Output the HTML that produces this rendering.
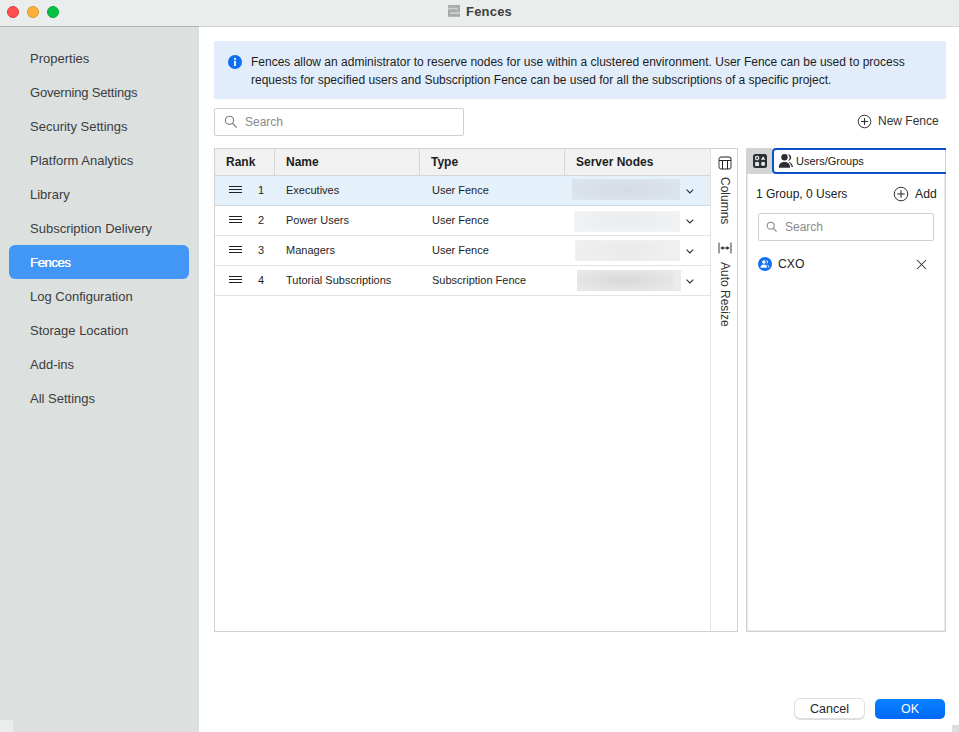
<!DOCTYPE html>
<html><head><meta charset="utf-8">
<style>
*{box-sizing:border-box;margin:0;padding:0}
html,body{width:959px;height:732px;overflow:hidden;background:#fff;font-family:"Liberation Sans",sans-serif;color:#222}
.abs{position:absolute}
svg{position:absolute;overflow:visible}
#title{left:0;top:0;width:959px;height:26px;background:#e9edec}
.dot{position:absolute;top:6px;width:12px;height:12px;border-radius:50%}
#side{left:0;top:27px;width:199px;height:705px;background:#dce0df}
.nav{position:absolute;left:30px;font-size:13px;color:#3b3d3e;line-height:16px;white-space:nowrap}
#sel{left:9px;top:245px;width:180px;height:34px;background:#4296f5;border-radius:6px}
#info{left:214px;top:41px;width:732px;height:58px;background:#e1edfb}
.t12{font-size:12px;line-height:18px;white-space:nowrap}
#search{left:214px;top:108px;width:250px;height:28px;border:1px solid #cfcfcf;border-radius:2px;background:#fff}
#table{left:214px;top:148px;width:524px;height:484px;border:1px solid #d2d2d2;background:#fff}
#thead{left:0;top:0;width:495px;height:27px;background:#f1f1f1;border-bottom:1px solid #d6d6d6}
.th{position:absolute;top:0;height:26px;font-weight:bold;font-size:12px;line-height:26px;color:#1e1e1e;white-space:nowrap}
.vd{position:absolute;top:0;width:1px;height:26px;background:#d6d6d6}
.row{position:absolute;left:0;width:495px;height:30px;border-bottom:1px solid #e3e3e3}
.cell{position:absolute;top:0;font-size:11px;line-height:29px;color:#1e1e1e;white-space:nowrap}
.blur{position:absolute;left:357px;width:108px;height:21px;filter:blur(0.4px)}
#colstrip{left:495px;top:0;width:1px;height:482px;background:#e2e2e2}
#rp{left:746px;top:174px;width:200px;height:458px;border:1px solid #cfd1d1;border-top:none;background:#fff;box-shadow:inset 1px -1px 0 #eaebeb,inset -1px 0 0 #eaebeb}
.btn{position:absolute;height:21px;border-radius:5px;font-size:13px;line-height:21px;text-align:center}
.vt{position:absolute;font-size:12px;line-height:14px;color:#333;transform-origin:0 0;transform:rotate(90deg);white-space:nowrap}
</style></head><body>
<div id="title" class="abs">
  <div class="dot" style="left:7px;background:#fe4e4e;border:0.5px solid #e03a3a"></div>
  <div class="dot" style="left:27px;background:#feb03b;border:0.5px solid #e0952a"></div>
  <div class="dot" style="left:47px;background:#05c245;border:0.5px solid #03a838"></div>
  <svg style="left:448px;top:5px" width="12" height="12" viewBox="0 0 12 12">
    <rect x="0" y="0" width="12" height="11.8" fill="#a9aaaa"/>
    <rect x="0" y="2.8" width="10" height="1.6" fill="#cfd1d1"/>
    <rect x="9.2" y="4.4" width="0.9" height="2.6" fill="#c4c6c6"/>
    <rect x="2" y="7.2" width="10" height="1.7" fill="#cfd1d1"/>
    <rect x="1" y="0.9" width="3.5" height="0.7" fill="#b8b9b9"/>
  </svg>
  <div class="abs" style="left:466px;top:4px;font-size:13px;font-weight:bold;color:#404040;line-height:16px;letter-spacing:0.2px">Fences</div>
</div>
<div id="side" class="abs"></div>
<div class="abs" style="left:0;top:26px;width:199px;height:1px;background:#aeb2b1"></div>
<div class="abs" style="left:199px;top:26px;width:760px;height:1px;background:#d3d4d4"></div>
<div id="sel" class="abs"></div>
<div class="nav" style="top:51px">Properties</div>
<div class="nav" style="top:85px;letter-spacing:-0.18px">Governing Settings</div>
<div class="nav" style="top:119px">Security Settings</div>
<div class="nav" style="top:153px">Platform Analytics</div>
<div class="nav" style="top:187px">Library</div>
<div class="nav" style="top:221px">Subscription Delivery</div>
<div class="nav" style="top:255px;color:#fff;letter-spacing:-0.4px;text-shadow:0.35px 0 0 #fff">Fences</div>
<div class="nav" style="top:289px">Log Configuration</div>
<div class="nav" style="top:323px">Storage Location</div>
<div class="nav" style="top:357px">Add-ins</div>
<div class="nav" style="top:391px">All Settings</div>
<div class="abs" style="left:0;top:720px;width:13px;height:12px;background:#e9eeec"></div>

<div id="info" class="abs">
  <svg style="left:14px;top:14px" width="14" height="14" viewBox="0 0 14 14">
    <circle cx="7" cy="7" r="7" fill="#0f6ff0"/>
    <rect x="6.1" y="3" width="1.8" height="1.8" fill="#fff"/>
    <rect x="6.1" y="5.8" width="1.8" height="5.2" fill="#fff"/>
  </svg>
  <div class="abs t12" style="left:37px;top:12px;color:#1d1d1d">Fences allow an administrator to reserve nodes for use within a clustered environment. User Fence can be used to process<br>requests for specified users and Subscription Fence can be used for all the subscriptions of a specific project.</div>
</div>

<div id="search" class="abs">
  <svg style="left:10px;top:7px" width="14" height="14" viewBox="0 0 14 14">
    <circle cx="4.5" cy="4.3" r="4.1" fill="none" stroke="#7c7c7c" stroke-width="1.15"/>
    <line x1="7.4" y1="7.2" x2="11.6" y2="11.5" stroke="#7c7c7c" stroke-width="1.2"/>
  </svg>
  <div class="abs" style="left:30px;top:5px;font-size:12px;color:#8a8a8a;line-height:16px">Search</div>
</div>
<svg style="left:857px;top:114px" width="15" height="15" viewBox="0 0 15 15">
  <circle cx="7.5" cy="7.5" r="6.3" fill="none" stroke="#333" stroke-width="1"/>
  <line x1="7.5" y1="4" x2="7.5" y2="11" stroke="#333" stroke-width="1.1"/>
  <line x1="4" y1="7.5" x2="11" y2="7.5" stroke="#333" stroke-width="1.1"/>
</svg>
<div class="abs" style="left:878px;top:113px;font-size:12px;line-height:16px;color:#333">New Fence</div>

<div id="table" class="abs">
  <div id="thead" class="abs">
    <div class="th" style="left:11px">Rank</div>
    <div class="vd" style="left:59px"></div>
    <div class="th" style="left:71px">Name</div>
    <div class="vd" style="left:204px"></div>
    <div class="th" style="left:216px">Type</div>
    <div class="vd" style="left:349px"></div>
    <div class="th" style="left:361px">Server Nodes</div>
  </div>
  <div class="row" style="top:27px;background:#e4f0fa;border-bottom-color:#cfdbe6">
    <svg style="left:14px;top:9px" width="14" height="8"><path d="M0 1.5H13M0 4.5H13M0 7.5H13" stroke="#222" stroke-width="1"/></svg>
    <div class="cell" style="left:43px">1</div><div class="cell" style="left:71px">Executives</div><div class="cell" style="left:217px">User Fence</div>
    <div class="blur" style="top:3px;background:radial-gradient(ellipse 60% 70% at 50% 50%,#d4dbe3,#dce4ec)"></div>
    <svg style="left:471px;top:13px" width="9" height="5"><path d="M0.6 0.6L3.9 3.9L7.2 0.6" fill="none" stroke="#2a2a2a" stroke-width="1.05"/></svg>
  </div>
  <div class="row" style="top:57px">
    <svg style="left:14px;top:9px" width="14" height="8"><path d="M0 1.5H13M0 4.5H13M0 7.5H13" stroke="#222" stroke-width="1"/></svg>
    <div class="cell" style="left:43px">2</div><div class="cell" style="left:71px">Power Users</div><div class="cell" style="left:217px">User Fence</div>
    <div class="blur" style="top:5px;background:radial-gradient(ellipse 60% 70% at 50% 45%,#e9ebed,#f2f3f4);left:359px;width:106px"></div>
    <svg style="left:471px;top:13px" width="9" height="5"><path d="M0.6 0.6L3.9 3.9L7.2 0.6" fill="none" stroke="#2a2a2a" stroke-width="1.05"/></svg>
  </div>
  <div class="row" style="top:87px">
    <svg style="left:14px;top:9px" width="14" height="8"><path d="M0 1.5H13M0 4.5H13M0 7.5H13" stroke="#222" stroke-width="1"/></svg>
    <div class="cell" style="left:43px">3</div><div class="cell" style="left:71px">Managers</div><div class="cell" style="left:217px">User Fence</div>
    <div class="blur" style="top:4px;background:radial-gradient(ellipse 60% 70% at 50% 50%,#eaeaea,#f0f0f0);left:360px;width:105px"><div class="abs" style="left:89px;top:0;width:16px;height:21px;background:#efefef"></div></div>
    <svg style="left:471px;top:13px" width="9" height="5"><path d="M0.6 0.6L3.9 3.9L7.2 0.6" fill="none" stroke="#2a2a2a" stroke-width="1.05"/></svg>
  </div>
  <div class="row" style="top:117px">
    <svg style="left:14px;top:9px" width="14" height="8"><path d="M0 1.5H13M0 4.5H13M0 7.5H13" stroke="#222" stroke-width="1"/></svg>
    <div class="cell" style="left:43px">4</div><div class="cell" style="left:71px">Tutorial Subscriptions</div><div class="cell" style="left:217px">Subscription Fence</div>
    <div class="blur" style="top:4px;background:radial-gradient(ellipse 55% 60% at 45% 50%,#d8d8d8,#e8e8e8);left:362px;width:104px"><div class="abs" style="left:97px;top:0;width:7px;height:21px;background:#ebebeb"></div></div>
    <svg style="left:471px;top:13px" width="9" height="5"><path d="M0.6 0.6L3.9 3.9L7.2 0.6" fill="none" stroke="#2a2a2a" stroke-width="1.05"/></svg>
  </div>
  <div id="colstrip" class="abs"></div>
  <svg style="left:503px;top:7px" width="14" height="14" viewBox="0 0 14 14">
    <rect x="1" y="1" width="12" height="12" rx="2.5" fill="none" stroke="#6a6a6a" stroke-width="1.3"/>
    <path d="M1 4.5H13M4.5 4.5V13M9.5 4.5V13" stroke="#222" stroke-width="1"/>
  </svg>
  <div class="vt" style="left:517px;top:28px">Columns</div>
  <svg style="left:503px;top:93px" width="14" height="12" viewBox="0 0 14 12">
    <path d="M1 0.5V11.5M13 0.5V11.5" stroke="#6a6a6a" stroke-width="1.3"/>
    <path d="M4 6H10" stroke="#2a2a2a" stroke-width="1.1"/>
    <path d="M2.4 6L5.2 3.9V8.1ZM11.6 6L8.8 3.9V8.1Z" fill="#2a2a2a"/>
  </svg>
  <div class="vt" style="left:517px;top:113px">Auto Resize</div>
</div>

<div class="abs" style="left:746px;top:148px;width:26px;height:26px;background:#d3d5d5"></div>
<svg style="left:753px;top:154px" width="14" height="14" viewBox="0 0 14 14">
  <rect x="0" y="0" width="14" height="14" rx="2.5" fill="#2b2f33"/>
  <circle cx="4.1" cy="4.1" r="1.65" fill="none" stroke="#e6e6e6" stroke-width="1.25"/>
  <path d="M10.1 2.2L12.3 5.7H7.9Z" fill="#e6e6e6"/>
  <rect x="2.1" y="8.1" width="3.9" height="3.9" fill="#e6e6e6"/>
  <circle cx="10.1" cy="9.9" r="2.05" fill="#e6e6e6"/>
</svg>
<div class="abs" style="left:772px;top:148px;width:174px;height:26px;overflow:hidden"><div class="abs" style="left:0;top:0;width:180px;height:26px;border:2.2px solid #0b52c8;border-radius:4px;background:#fff"></div><div class="abs" style="left:173px;top:2px;width:1px;height:22px;background:#d2d2d2"></div></div>
<svg style="left:778px;top:154px" width="16" height="14" viewBox="0 0 16 14">
  <path d="M9.6 0.3C11.6 0.1 13.2 1.7 13.2 3.5C13.2 5.3 11.8 6.8 10 6.9C11 6 11.6 4.9 11.6 3.5C11.6 2.2 10.9 1 9.6 0.3Z" fill="#2b2f33"/>
  <path d="M11.2 7.9C13.4 8.8 14.8 10.6 15 13H13.6C13.3 11.2 12.4 9.6 10.9 8.6Z" fill="#2b2f33"/>
  <circle cx="6.5" cy="3.2" r="3.2" fill="#2b2f33"/>
  <path d="M0.9 13.8V12.6C0.9 10 3 8 6.45 8C9.9 8 12 10 12 12.6V13.8Z" fill="#2b2f33"/>
</svg>
<div class="abs" style="left:796px;top:154px;font-size:11px;line-height:14px;color:#222">Users/Groups</div>
<div id="rp" class="abs"></div>
<div class="abs" style="left:756px;top:186px;font-size:12px;line-height:16px;color:#222">1 Group, 0 Users</div>
<svg style="left:893px;top:186px" width="16" height="16" viewBox="0 0 16 16">
  <circle cx="8" cy="8" r="6.8" fill="none" stroke="#333" stroke-width="1"/>
  <line x1="8" y1="4.3" x2="8" y2="11.7" stroke="#333" stroke-width="1.1"/>
  <line x1="4.3" y1="8" x2="11.7" y2="8" stroke="#333" stroke-width="1.1"/>
</svg>
<div class="abs" style="left:915px;top:186px;font-size:12.2px;line-height:16px;color:#222">Add</div>
<div class="abs" style="left:758px;top:213px;width:176px;height:28px;border:1px solid #cfcfcf;border-radius:2px"></div>
<svg style="left:766px;top:221px" width="12" height="12" viewBox="0 0 12 12">
  <circle cx="4.7" cy="4.7" r="3.5" fill="none" stroke="#8a8a8a" stroke-width="1.1"/>
  <line x1="7.3" y1="7.3" x2="10.6" y2="10.6" stroke="#8a8a8a" stroke-width="1.2"/>
</svg>
<div class="abs" style="left:785px;top:219px;font-size:12px;line-height:16px;color:#8a8a8a">Search</div>
<svg style="left:758px;top:257px" width="14" height="14" viewBox="0 0 14 14">
  <circle cx="7" cy="7" r="7" fill="#0f6ff0"/>
  <circle cx="5.8" cy="5" r="1.8" fill="#fff"/>
  <path d="M2.5 10.8C2.5 8.7 3.8 7.6 5.8 7.6C7.8 7.6 9.1 8.7 9.1 10.8Z" fill="#fff"/>
  <path d="M8.3 3.4A1.7 1.7 0 0 1 8.6 6.6M9.5 7.9C10.4 8.5 10.9 9.4 11 10.6" fill="none" stroke="#fff" stroke-width="0.9"/>
</svg>
<div class="abs" style="left:778px;top:256px;font-size:12.2px;line-height:16px;color:#222">CXO</div>
<svg style="left:916px;top:259px" width="11" height="11" viewBox="0 0 11 11">
  <path d="M1 1L10 10M10 1L1 10" stroke="#333" stroke-width="1.05"/>
</svg>

<div class="btn" style="left:794px;top:698px;width:71px;background:#fff;border:1px solid #e0e0e0;border-radius:6px;box-shadow:0 1px 0.6px rgba(0,0,0,0.13);color:#262626;font-size:12.5px;line-height:21px">Cancel</div>
<div class="btn" style="left:875px;top:699px;width:70px;height:20px;background:linear-gradient(#0782ff,#0068f6);color:#fff;font-size:12.5px;line-height:21px">OK</div>
<div class="abs" style="left:952px;top:725px;width:7px;height:7px;background:#dcdfde"></div>
</body></html>
